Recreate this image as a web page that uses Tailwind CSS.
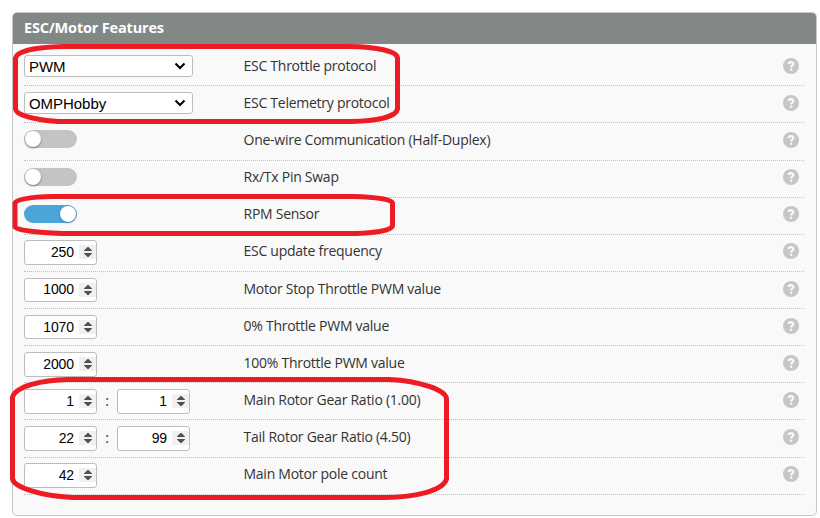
<!DOCTYPE html>
<html lang="en">
<head>
<meta charset="utf-8">
<title>ESC/Motor Features</title>
<script src="https://cdn.jsdelivr.net/npm/@tailwindcss/browser@4"></script>
</head>
<body class="bg-white w-[820px] h-[518px] overflow-hidden relative pt-3 pl-3 font-['Open_Sans',sans-serif] text-[#333]">
<section class="w-[805px] h-[504px] border border-[#c6c6c6] rounded-[5px] bg-[#f9f9f9] overflow-hidden flex flex-col">
  <h1 class="h-[31px] shrink-0 bg-[#828885] text-white font-bold text-[14.5px] tracking-[-0.18px] leading-[30px] pl-[11px] whitespace-nowrap">ESC/Motor Features</h1>
  <div id="rows" class="flex flex-col pl-[11px] pr-[12px]"></div>
</section>
<svg class="absolute left-0 top-0 pointer-events-none" width="820" height="518" fill="none" stroke="#ed1c24" stroke-width="5" stroke-linejoin="round">
  <path d="M64 46.5H350C376 47 397 51 397.500 58V109C396 117 376 121 351 121.500H58C34 120 16 115 15.500 109V58C17 51 35 47 64 46.500Z"/>
  <path d="M53 196.500H353C376 197 392 199 392.500 203V226C391 231 371 233.500 345 233.500H62C35 232.500 16 230 15 227V203C17 199 32 197 53 196.500Z"/>
  <path d="M68 379.500H389C420 381 446 390 446.500 399V479C443 491 415 497 385 497.500H72C40 496 14 487 12.500 479V397C16 386 42 380 68 379.500Z"/>
</svg>
<script>
const select = t => `<div class="w-[169px] h-[22px] border border-[#bdbdbd] rounded-[3px] bg-white flex items-center justify-between pl-1 pr-[6px] font-['Liberation_Sans',sans-serif] text-[15px] tracking-[-0.05px] leading-5 text-black"><span class="relative top-[1px]">${t}</span><svg width="12" height="8" viewBox="0 0 12 8" fill="none" stroke="#000" stroke-width="2"><path d="M1.500 1.500L6 6L10.500 1.500"/></svg></div>`;
const off = `<div class="w-[53px] h-[18px] rounded-full bg-[#c4c4c4] flex items-center justify-start px-px"><i class="block size-4 rounded-full bg-white shadow-[0_1px_2px_rgba(0,0,0,0.45)]"></i></div>`;
const on = `<div class="w-[53px] h-[18px] rounded-full bg-[#4aa5d9] flex items-center justify-end px-px"><i class="block size-4 rounded-full bg-white shadow-[0_1px_2px_rgba(0,0,0,0.3)]"></i></div>`;
const num = (v, h, pad = "pb-0") => `<div class="w-[73px] ${h} border border-[#bdbdbd] rounded-[3px] bg-white flex items-center justify-end font-['Liberation_Sans',sans-serif] text-[14px] tracking-[-0.1px] leading-5 text-black"><span class="mr-[5px] ${pad}">${v}</span><span class="w-[17px] h-[14px] bg-[#f0f0f0] flex items-center"><svg width="8" height="10" viewBox="0 0 8 10" fill="#505050" class="ml-[5px]"><path d="M3.500 0H4.500L8 3.500V4H0V3.500ZM3.500 10H4.500L8 6.500V6H0V6.500Z"/></svg></span></div>`;
const colon = `<span class="w-5 pt-[2px] text-center text-[14px] leading-5">:</span>`;
const A = "h-[25px] pb-px", B = "h-6";
/* row height, control offset, label offset, control, label */
const rows = [
 ["h-[42px]", "pt-[11px]", "pt-[12px]", select("PWM"), "ESC Throttle protocol"],
 ["h-[37px]", "pt-[6px]", "pt-[7px]", select("OMPHobby"), "ESC Telemetry protocol"],
 ["h-[38px]", "pt-[7px]", "pt-[7px]", off, "One-wire Communication (Half-Duplex)"],
 ["h-[37px]", "pt-[7px]", "pt-[6px]", off, "Rx/Tx Pin Swap"],
 ["h-[37px]", "pt-[7px]", "pt-[6px]", on, "RPM Sensor"],
 ["h-[37px]", "pt-[5px]", "pt-[6px]", num(250, A), "ESC update frequency"],
 ["h-[37px]", "pt-[6px]", "pt-[7px]", num(1000, B, "pb-[2px]"), "Motor Stop Throttle PWM value"],
 ["h-[37px]", "pt-[6px]", "pt-[7px]", num(1070, B), "0% Throttle PWM value"],
 ["h-[37px]", "pt-[6px]", "pt-[7px]", num(2000, A), "100% Throttle PWM value"],
 ["h-[37px]", "pt-[6px]", "pt-[7px]", num(1, A) + colon + num(1, A), "Main Rotor Gear Ratio (1.00)"],
 ["h-[38px]", "pt-[6px]", "pt-[7px]", num(22, A) + colon + num(99, A), "Tail Rotor Gear Ratio (4.50)"],
 ["h-[37px]", "pt-[5px]", "pt-[6px]", num(42, A), "Main Motor pole count"],
];
document.getElementById("rows").innerHTML = rows.map(([h, c, l, control, label]) => `
<div class="${h} shrink-0 flex items-start border-b border-dotted border-[#bfbfbf]">
  <div class="w-[219.500px] shrink-0 flex ${c}">${control}</div>
  <div class="grow ${l} text-[14px] tracking-[-0.26px] leading-5 whitespace-nowrap">${label}</div>
  <div class="${l} pr-[5px]"><svg class="mt-[2px]" width="16" height="16" viewBox="0 0 16 16"><circle cx="8" cy="8" r="8" fill="#c6c6c6"/><path d="M5.600 6C5.900 3.300 10.400 3.500 10.300 6C10.200 7.600 8.100 7.600 8.100 9.500" fill="none" stroke="#f9f9f9" stroke-width="2.200"/><rect x="7" y="10.700" width="2.200" height="2.100" fill="#f9f9f9"/></svg></div>
</div>`).join("");
</script>
</body>
</html>
